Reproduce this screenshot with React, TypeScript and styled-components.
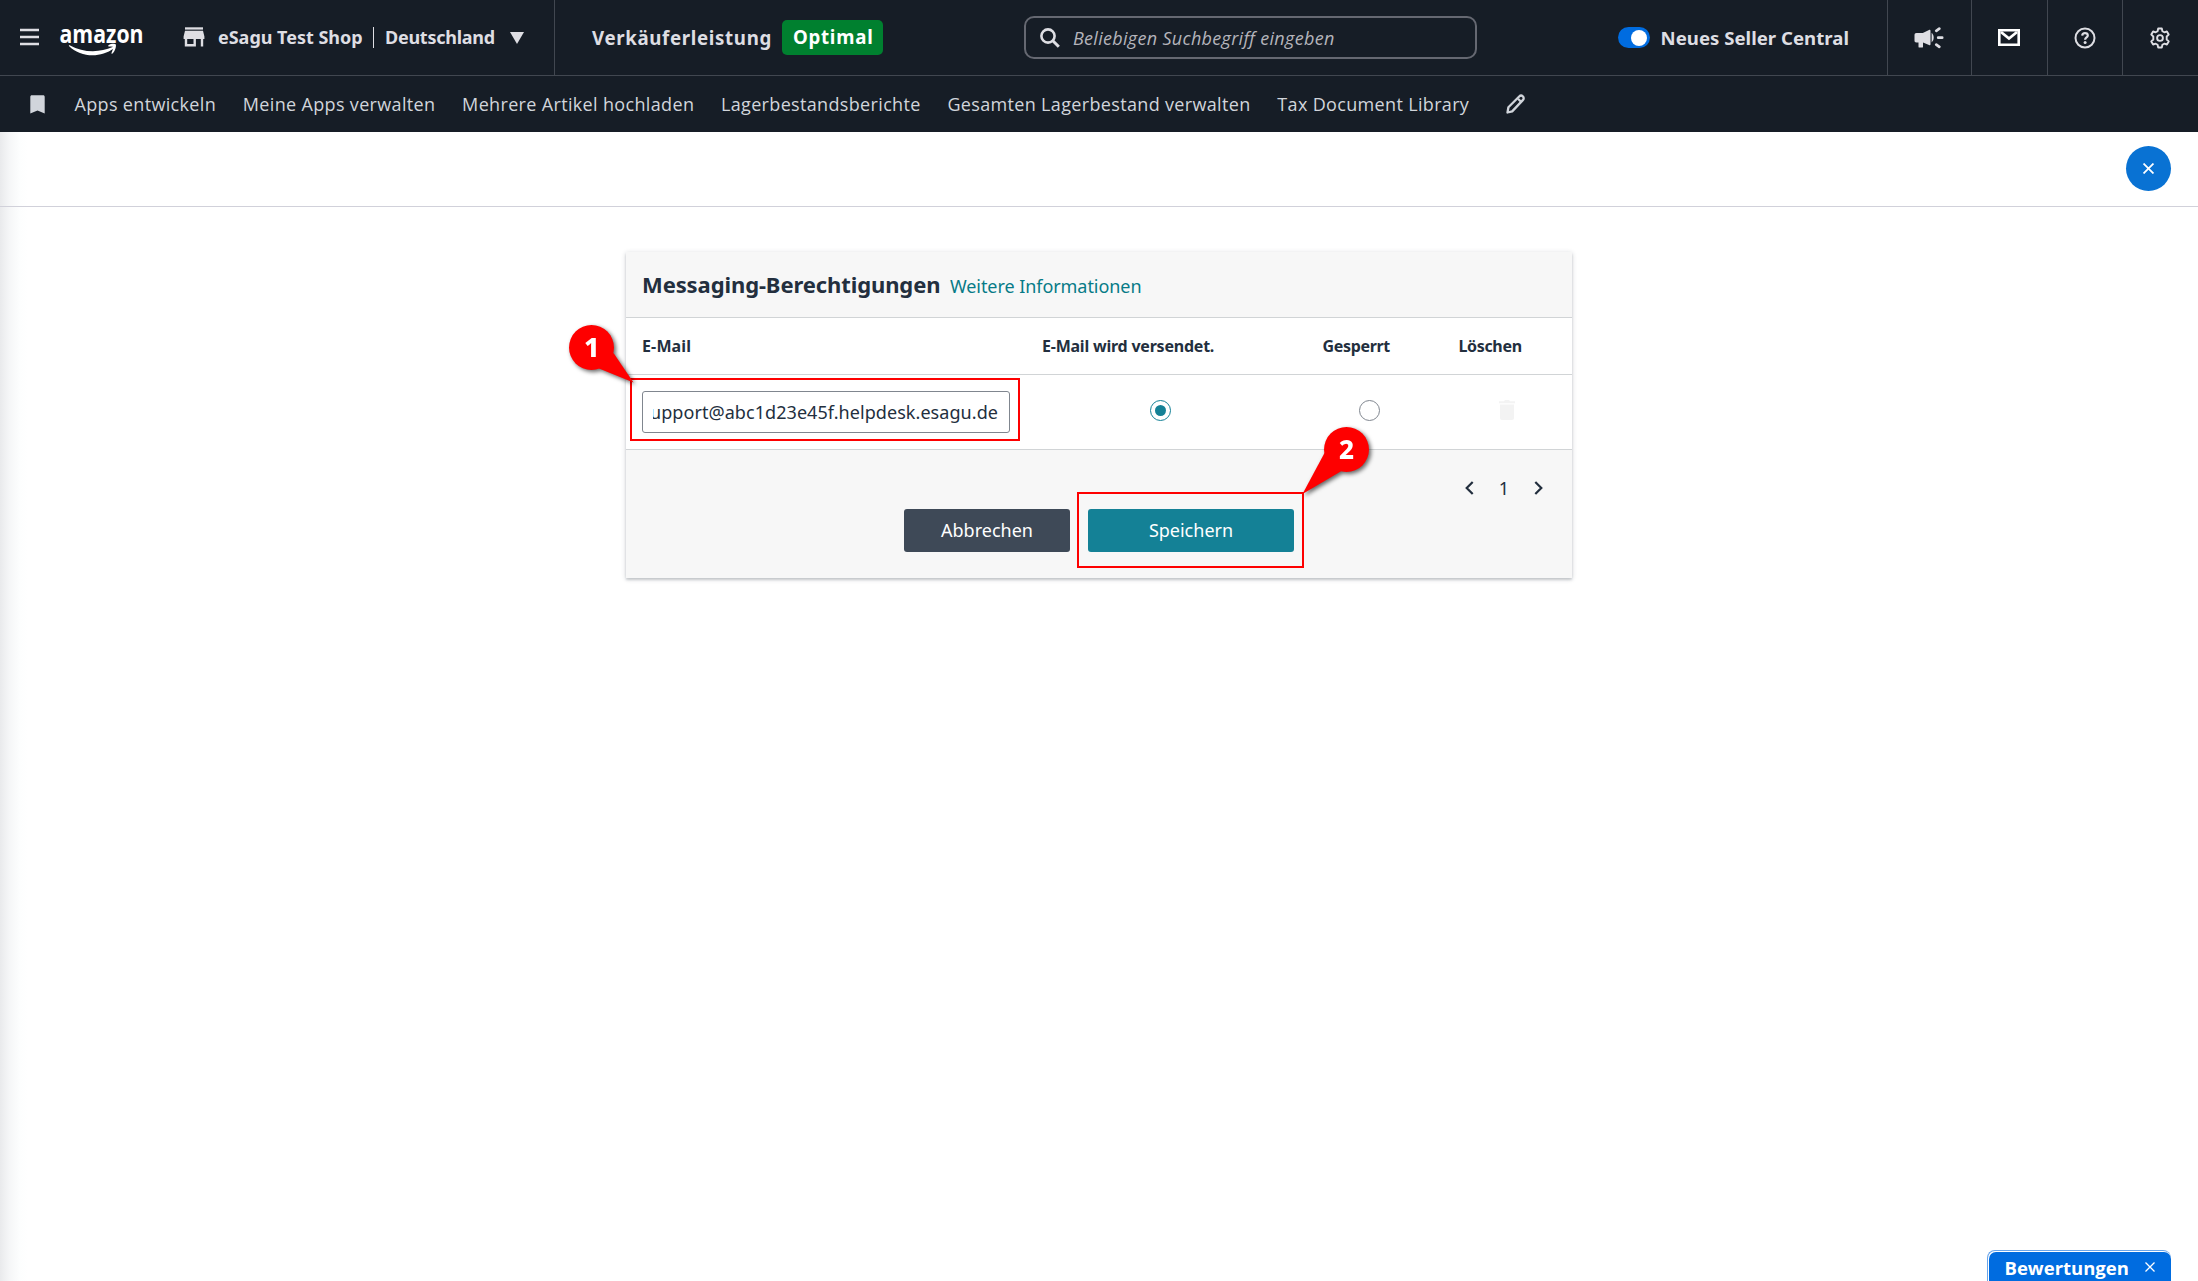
import React from 'react';
import styled, { createGlobalStyle } from 'styled-components';

const GlobalStyle = createGlobalStyle`
  *, *::before, *::after { box-sizing: border-box; }
  body {
    margin: 0;
    background: #fff;
    color: #232f3e;
    font-family: "Noto Sans", "Open Sans", sans-serif;
    font-size: 18px;
  }
  button, input { font: inherit; color: inherit; margin: 0; }
  svg { display: block; flex: none; }
`;

const Page = styled.div`
  position: relative;
  display: flex;
  flex-direction: column;
  height: 1281px;
  overflow: hidden;
`;

/* ---------- top bar ---------- */

const TopBar = styled.header`
  display: flex;
  align-items: stretch;
  height: 76px;
  background: #161d26;
  border-bottom: 1px solid #414750;
  color: #dedee3;
  font-weight: 700;
`;

const AccountSection = styled.div`
  display: flex;
  align-items: center;
  width: 555px;
  padding: 0 0 1px 20px;
  border-right: 1px solid #414750;
`;

const MenuButton = styled.button`
  display: flex;
  padding: 0;
  border: 0;
  background: none;
  color: #dedee3;
`;

const Logo = styled.svg`
  margin: 8px 0 0 19px;
  overflow: visible;
`;

const StoreSwitcher = styled.div`
  display: flex;
  align-items: center;
  margin-left: 38px;
  font-size: 18px;
  letter-spacing: -0.02px;
  white-space: nowrap;
`;

const StoreName = styled.span`
  margin-left: 13px;
  width: 155px;
`;

const Country = styled.span`
  display: flex;
  align-items: center;
  height: 21px;
  padding-left: 11px;
  border-left: 1px solid #dedee3;
  letter-spacing: -0.26px;
`;

const Caret = styled.span`
  margin: 1px 0 0 15px;
  border: 7px solid transparent;
  border-top: 12px solid #dedee3;
  border-bottom: 0;
`;

const HealthSection = styled.div`
  display: flex;
  align-items: center;
  width: 469px;
  padding: 0 0 1px 37px;
  font-size: 18.7px;
  letter-spacing: 0.65px;
`;

const HealthBadge = styled.span`
  display: flex;
  align-items: center;
  height: 35px;
  margin-left: 10px;
  padding: 0 10px 1px 11px;
  border-radius: 5px;
  background: #00802f;
  color: #fff;
  letter-spacing: 0.75px;
`;

const SearchBox = styled.label`
  display: flex;
  align-items: center;
  align-self: center;
  width: 453px;
  height: 43px;
  padding: 0 14px;
  border: 2px solid #656871;
  border-radius: 10px;
`;

const SearchInput = styled.input`
  flex: 1;
  min-width: 0;
  margin-left: 13px;
  padding: 0;
  border: 0;
  outline: 0;
  background: none;
  font-family: "Open Sans", sans-serif;
  font-style: italic;
  font-weight: 400;
  font-size: 18px;
  letter-spacing: 0.3px;
  &::placeholder { color: #b4b4bb; opacity: 1; }
`;

const ToggleSection = styled.div`
  display: flex;
  align-items: center;
  gap: 10.5px;
  margin-left: auto;
  padding: 0 38px 0 0;
  font-size: 18.6px;
  letter-spacing: 0.02px;
`;

const Switch = styled.span`
  display: flex;
  align-items: center;
  justify-content: flex-end;
  width: 32px;
  height: 21px;
  padding: 0 3px;
  border-radius: 11px;
  background: #006ce0;
  &::after {
    content: '';
    width: 16px;
    height: 16px;
    border-radius: 50%;
    background: #fff;
  }
`;

const IconCell = styled.button<{ $width: number }>`
  display: flex;
  align-items: center;
  justify-content: center;
  width: ${(p) => p.$width}px;
  padding: 0 1px 0 0;
  border: 0;
  border-left: 1px solid #414750;
  background: none;
  color: #dedee3;
`;

/* ---------- bookmarks ---------- */

const Bookmarks = styled.nav`
  display: flex;
  align-items: center;
  height: 56px;
  padding-left: 30px;
  background: #161d26;
  color: #d1d5db;
  font-family: "Open Sans", sans-serif;
  letter-spacing: 0.34px;
  white-space: nowrap;
`;

const BookmarkLinks = styled.div`
  display: flex;
  gap: 26.7px;
  margin: 0 36.5px 0 29.5px;
`;

/* ---------- work area ---------- */

const Workspace = styled.main`
  flex: 1;
  background: linear-gradient(to right, #e9eaec 0, #f5f6f7 9px, #fdfefe 20px, #fff 28px);
`;

const CloseBar = styled.div`
  display: flex;
  align-items: flex-start;
  justify-content: flex-end;
  height: 75px;
  padding: 14px 27px 0 0;
  border-bottom: 1px solid #d1d1da;
`;

const CloseButton = styled.button`
  display: flex;
  align-items: center;
  justify-content: center;
  width: 45px;
  height: 45px;
  padding: 0;
  border: 0;
  border-radius: 50%;
  background: #0972d3;
  color: #fff;
`;

const Card = styled.section`
  position: relative;
  width: 946px;
  margin: 45px auto 0;
  background: #fff;
  box-shadow: 0 2px 2px rgba(35, 47, 62, 0.16), 0 1px 5px rgba(35, 47, 62, 0.2);
`;

const CardHeader = styled.div`
  display: flex;
  align-items: center;
  height: 66px;
  padding: 0 16px 2px;
  background: #f7f7f7;
  border-bottom: 1px solid #d1d4d6;
`;

const CardHeading = styled.div`
  display: flex;
  align-items: baseline;
  gap: 9.5px;
`;

const Title = styled.h1`
  margin: 0;
  font-size: 22px;
  font-weight: 700;
  letter-spacing: -0.1px;
`;

const MoreLink = styled.a`
  color: #077b87;
  letter-spacing: -0.06px;
`;

const TableRow = styled.div<{ $height: number }>`
  display: grid;
  grid-template-columns: 400px 281px 136px 1fr;
  align-items: center;
  height: ${(p) => p.$height}px;
  padding-left: 16px;
  border-bottom: 1px solid #d1d4d6;
`;

const HeadCell = styled.span`
  font-size: 16px;
  font-weight: 700;
  letter-spacing: -0.22px;
  &:first-child { letter-spacing: 0.15px; }
  &:nth-child(n + 3) { margin-left: -0.5px; letter-spacing: -0.34px; }
`;

const EmailField = styled.div`
  display: flex;
  justify-content: flex-end;
  align-items: center;
  width: 368px;
  height: 42px;
  padding: 0 11px 0 9px;
  border: 1px solid #80868f;
  border-radius: 3px;
`;

const EmailClip = styled.div`
  display: flex;
  justify-content: flex-end;
  width: 345px;
  overflow: hidden;
  white-space: nowrap;
  letter-spacing: 0.06px;
`;

const ControlCell = styled.div<{ $indent: number }>`
  padding: 0 0 4px ${(p) => p.$indent}px;
`;

const Radio = styled.span<{ $checked?: boolean }>`
  display: flex;
  align-items: center;
  justify-content: center;
  width: 21px;
  height: 21px;
  border: 1px solid ${(p) => (p.$checked ? '#148196' : '#80868f')};
  border-radius: 50%;
  &::after {
    content: '';
    width: 11px;
    height: 11px;
    border-radius: 50%;
    background: ${(p) => (p.$checked ? '#148196' : 'transparent')};
  }
`;

const CardFooter = styled.div`
  height: 128px;
  padding-top: 24px;
  background: #f7f7f7;
`;

const Pagination = styled.div`
  display: flex;
  align-items: center;
  justify-content: flex-end;
  gap: 25px;
  height: 27px;
  padding-right: 29px;
`;

const Actions = styled.div`
  display: flex;
  justify-content: center;
  gap: 18px;
  margin-top: 8px;
`;

const ActionButton = styled.button<{ $primary?: boolean }>`
  width: ${(p) => (p.$primary ? 206 : 166)}px;
  height: 43px;
  padding: 0 0 1px;
  border: 0;
  border-radius: 3px;
  background: ${(p) => (p.$primary ? '#148196' : '#3e4957')};
  color: #fff;
`;

/* ---------- annotations ---------- */

const Highlight = styled.div<{ $x: number; $y: number; $w: number; $h: number }>`
  position: absolute;
  left: ${(p) => p.$x}px;
  top: ${(p) => p.$y}px;
  width: ${(p) => p.$w}px;
  height: ${(p) => p.$h}px;
  border: 2px solid #fe0000;
`;

const Pin = styled.svg<{ $x: number; $y: number }>`
  position: absolute;
  left: ${(p) => p.$x}px;
  top: ${(p) => p.$y}px;
  overflow: visible;
  filter: drop-shadow(2px 2px 2px rgba(0, 0, 0, 0.6));
  font-family: "Noto Sans", sans-serif;
  font-weight: 800;
`;

/* ---------- feedback tab ---------- */

const FeedbackTab = styled.div`
  position: absolute;
  right: 27px;
  bottom: 0;
  height: 31px;
  padding: 1px 0 0 1px;
  border: 1px solid #6aa5ea;
  border-width: 1px 0 0 1px;
  border-radius: 8px 8px 0 0;
`;

const FeedbackBody = styled.div`
  display: flex;
  align-items: center;
  width: 182px;
  height: 29px;
  padding: 1px 0 0 15.5px;
  gap: 16px;
  border-radius: 7px 7px 0 0;
  background: #006ce0;
  color: #fff;
  font-family: "Open Sans", sans-serif;
  font-size: 18.5px;
  font-weight: 700;
`;

const Cross = ({ size, width }: { size: number; width: number }) => (
  <svg width={size} height={size} viewBox="0 0 10 10" stroke="currentColor" strokeWidth={width} fill="none">
    <path d="M0.5 0.5 9.5 9.5M9.5 0.5 0.5 9.5" />
  </svg>
);

const LINKS = [
  'Apps entwickeln',
  'Meine Apps verwalten',
  'Mehrere Artikel hochladen',
  'Lagerbestandsberichte',
  'Gesamten Lagerbestand verwalten',
  'Tax Document Library',
];

export default function App() {
  return (
    <Page>
      <GlobalStyle />
      <TopBar>
        <AccountSection>
          <MenuButton aria-label="Menu">
            <svg width="20" height="18" viewBox="0 0 20 18" fill="currentColor">
              <path d="M0 0.8h19v2.400H0zM0 7.800h19v2.400H0zM0 14.800h19v2.400H0z" />
            </svg>
          </MenuButton>
          <Logo width="86" height="34" viewBox="0 0 86 34" fill="#fff">
            <text
              x="0.500"
              y="19"
              fontFamily="Open Sans, sans-serif"
              fontSize="25.500"
              fontWeight="700"
              textLength="84"
              lengthAdjust="spacingAndGlyphs"
            >
              amazon
            </text>
            <path d="M10.200 22.300c-.8-.7 0-1.400.9-.9 12.500 7.200 29.500 7.600 42.500 1.700 1.400-.6 2.200.6 1 1.500-12.600 9.300-32.400 9.400-44.400-2.300z" />
            <path d="M49.500 21.300c2.500-1.800 6.400-1.900 7.200-.9.800 1.200-.3 6.400-3.200 9-.7.600-1.300.3-1-.4.900-2.200 2-5 1.500-5.900-.6-.8-2.600-.7-4.100-.6-.8.100-1.100-.7-.4-1.200z" />
          </Logo>
          <StoreSwitcher>
            <svg width="22" height="20" viewBox="0 0 22 20" fill="currentColor">
              <path d="M2 0.300h18v2.300H2z" />
              <path d="M2 3.800h18l1.400 5.800v2.300h-1.200v7.600h-2.400v-7.600h-4.900v7.600H1.800v-7.600H0.600V9.600zM4.200 11.900v5.200h6.300v-5.200z" fillRule="evenodd" />
            </svg>
            <StoreName>eSagu Test Shop</StoreName>
            <Country>
              Deutschland
              <Caret />
            </Country>
          </StoreSwitcher>
        </AccountSection>

        <HealthSection>
          Verkäuferleistung
          <HealthBadge>Optimal</HealthBadge>
        </HealthSection>

        <SearchBox>
          <svg width="20" height="20" viewBox="0 0 20 20" fill="none" stroke="currentColor">
            <circle cx="8" cy="8" r="6.600" strokeWidth="2.600" />
            <path d="M12.800 12.800l6 6" strokeWidth="3" />
          </svg>
          <SearchInput placeholder="Beliebigen Suchbegriff eingeben" />
        </SearchBox>

        <ToggleSection>
          <Switch />
          Neues Seller Central
        </ToggleSection>

        <IconCell $width={84} aria-label="Announcements">
          <svg width="30" height="22" viewBox="0 0 30 22" fill="currentColor">
            <path d="M2.500 6H8.800L15 2.900c.9-.4 1.500-.1 1.500.8v13.600c0 .9-.6 1.200-1.500.8L9 15.500v4.200c0 .6-.3.900-.9.900H5.400c-.6 0-.9-.3-.9-.9v-4.200H2.500C1 15.500.5 14.800.5 13.500V8c0-1.300.6-2 2-2z" />
            <path d="M17.600 5.800c2.800 2.700 2.800 7 0 9.600z" />
            <path d="M22.300 3.800l3-2.200M24.200 10.700h4M22.300 17.600l3 2.200" stroke="currentColor" strokeWidth="2.700" strokeLinecap="round" />
          </svg>
        </IconCell>
        <IconCell $width={76} aria-label="Messages">
          <svg width="22" height="18" viewBox="0 0 22 18" fill="none" stroke="#fff">
            <path d="M1.300 1.300h19.400v14.400H1.300z" strokeWidth="2.600" />
            <path d="M3 3l8 6.500L19 3" strokeWidth="2.800" />
          </svg>
        </IconCell>
        <IconCell $width={75} aria-label="Help">
          <svg width="22" height="22" viewBox="0 0 22 22" fill="none" stroke="currentColor">
            <circle cx="11" cy="11" r="9.500" strokeWidth="2" />
            <path d="M8.200 8.600c.1-1.600 1.200-2.500 2.800-2.500 1.700 0 2.800.9 2.800 2.300 0 2-2.700 2-2.700 4.300" strokeWidth="2.200" />
            <circle cx="11.100" cy="15.600" r="1.500" fill="currentColor" stroke="none" />
          </svg>
        </IconCell>
        <IconCell $width={76} aria-label="Settings">
          <svg width="22" height="22" viewBox="0 0 22 22" fill="none" stroke="currentColor" strokeWidth="1.900" strokeLinejoin="round">
            <path d="M9.200 1.500h3.600l.6 2.700 1.900 1.100 2.600-.8 1.800 3.100-2 1.900v3l2 1.900-1.800 3.100-2.600-.8-1.900 1.100-.6 2.700H9.200l-.6-2.700-1.900-1.100-2.600.8-1.800-3.100 2-1.900v-3l-2-1.900 1.800-3.100 2.600.8 1.900-1.100z" />
            <circle cx="11" cy="11" r="2.900" />
          </svg>
        </IconCell>
      </TopBar>

      <Bookmarks>
        <svg width="15" height="19" viewBox="0 0 15 19" fill="currentColor">
          <path d="M2 0.300h11c1.200 0 1.700.6 1.700 1.700v16.500l-7.200-3-7.200 3V2C.3.900.8.300 2 .3z" />
        </svg>
        <BookmarkLinks>
          {LINKS.map((label) => (
            <span key={label}>{label}</span>
          ))}
        </BookmarkLinks>
        <svg width="20" height="20" viewBox="0 0 20 20" fill="none" stroke="currentColor" strokeWidth="2.300" strokeLinejoin="round">
          <path d="M1.500 18.500l.9-5.200L13.200 2.500c1.200-1.200 2.500-1.200 3.600-.2 1.200 1.100 1.200 2.600 0 3.800L6.200 17.400z" />
          <path d="M12 4.800l3 3" />
        </svg>
      </Bookmarks>

      <Workspace>
        <CloseBar>
          <CloseButton aria-label="Close">
            <Cross size={11} width={1.6} />
          </CloseButton>
        </CloseBar>

        <Card>
          <CardHeader>
            <CardHeading>
              <Title>Messaging-Berechtigungen</Title>
              <MoreLink>Weitere Informationen</MoreLink>
            </CardHeading>
          </CardHeader>
          <TableRow $height={57}>
            <HeadCell>E-Mail</HeadCell>
            <HeadCell>E-Mail wird versendet.</HeadCell>
            <HeadCell>Gesperrt</HeadCell>
            <HeadCell>Löschen</HeadCell>
          </TableRow>
          <TableRow $height={75}>
            <EmailField>
              <EmailClip>upport@abc1d23e45f.helpdesk.esagu.de</EmailClip>
            </EmailField>
            <ControlCell $indent={108}>
              <Radio $checked />
            </ControlCell>
            <ControlCell $indent={36}>
              <Radio />
            </ControlCell>
            <ControlCell $indent={40}>
              <svg width="16" height="20" viewBox="0 0 16 20" fill="#f3f3f3">
                <path d="M0 1.200h5L6 0h4l1 1.200h5v2H0zM1 4.500h14V18c0 1.300-.7 2-2 2H3c-1.300 0-2-.7-2-2z" />
              </svg>
            </ControlCell>
          </TableRow>
          <CardFooter>
            <Pagination>
              <svg width="9" height="14" viewBox="0 0 9 14" fill="none" stroke="#232f3e" strokeWidth="2.200">
                <path d="M7.700 1L1.700 7l6 6" />
              </svg>
              <span>1</span>
              <svg width="9" height="14" viewBox="0 0 9 14" fill="none" stroke="#232f3e" strokeWidth="2.200">
                <path d="M1.300 1l6 6-6 6" />
              </svg>
            </Pagination>
            <Actions>
              <ActionButton>Abbrechen</ActionButton>
              <ActionButton $primary>Speichern</ActionButton>
            </Actions>
          </CardFooter>

          <Highlight $x={4} $y={126} $w={390} $h={63} />
          <Highlight $x={451} $y={240} $w={227} $h={76} />
          <Pin $x={-57} $y={73} width="66" height="58">
            <circle cx="22.500" cy="22.500" r="22.500" fill="#fe0000" />
            <path d="M30 43.500L64.500 57.500 44.500 28z" fill="#fe0000" />
            <text x="22.800" y="32" fontSize="27" textAnchor="middle" fill="#fff">1</text>
          </Pin>
          <Pin $x={698} $y={175} width="66" height="68">
            <circle cx="22.500" cy="22.500" r="22.500" fill="#fe0000" />
            <path d="M0.500 26L-21.500 67 17.500 44z" fill="#fe0000" />
            <text x="22.500" y="32" fontSize="26" textAnchor="middle" fill="#fff">2</text>
          </Pin>
        </Card>
      </Workspace>

      <FeedbackTab>
        <FeedbackBody>
          Bewertungen
          <Cross size={10} width={1.3} />
        </FeedbackBody>
      </FeedbackTab>
    </Page>
  );
}
